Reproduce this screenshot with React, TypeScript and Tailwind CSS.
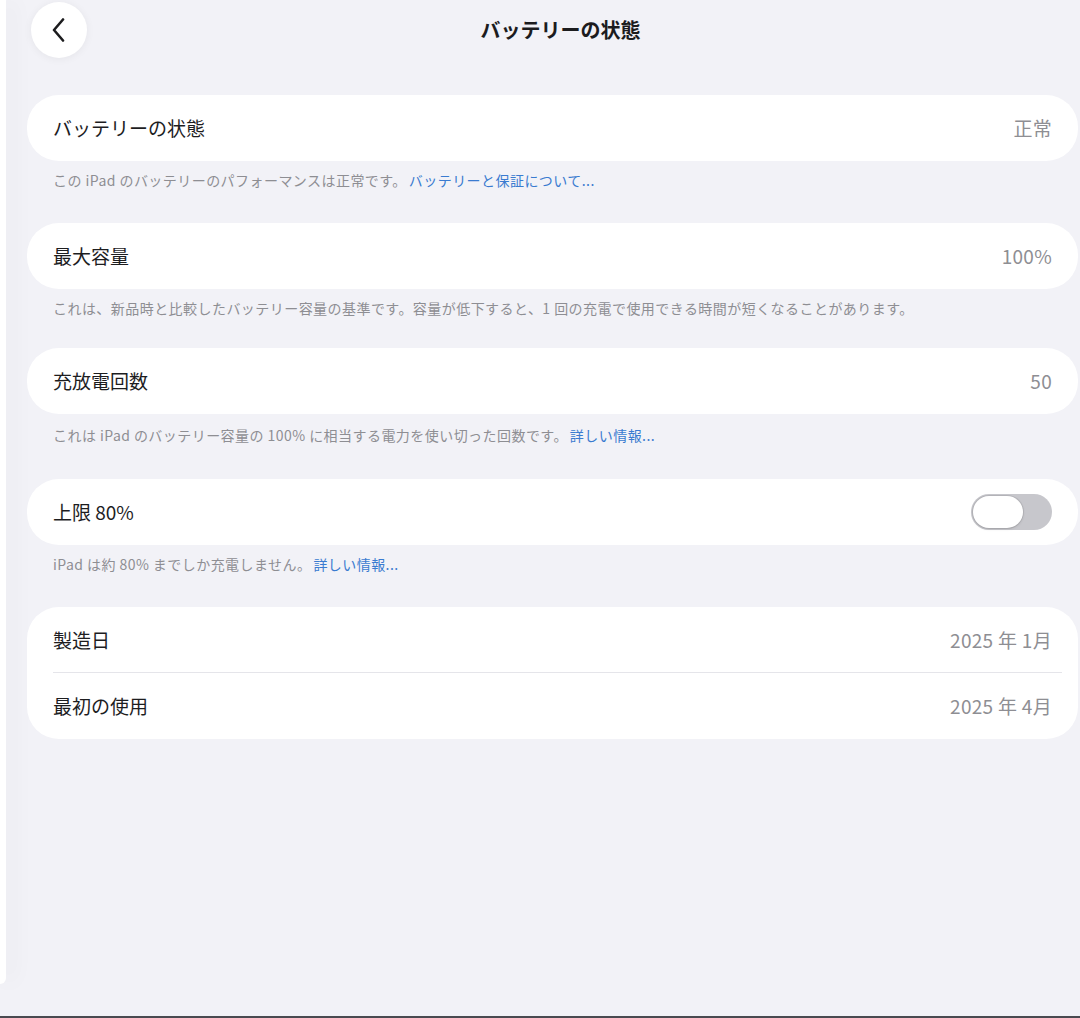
import type { ReactNode } from 'react'

const font = { fontFamily: '"Noto Sans CJK JP", "Noto Sans", sans-serif' }

function Card({ children }: { children: ReactNode }) {
  return <div className="bg-white rounded-[32px] mr-[2px]">{children}</div>
}

function Row({ label, value, divider }: { label: string; value?: ReactNode; divider?: boolean }) {
  return (
    <div className="relative h-[66px] flex items-center justify-between pl-[26px] pr-[26px]">
      <span className="text-[19px] text-[#1d1d1f]">{label}</span>
      {typeof value === 'string' ? (
        <span className="text-[19px] text-[#8e8e93] tracking-[0.3px]">{value}</span>
      ) : (
        value
      )}
      {divider && <div className="absolute left-[26px] right-[16px] bottom-0 h-px bg-[#e5e5ea]" />}
    </div>
  )
}

function Note({ children, className = 'h-[62px] pt-[10px]' }: { children: ReactNode; className?: string }) {
  return (
    <div className={`${className} pl-[26px] text-[14px] leading-[18px] text-[#8e8e93] tracking-[0.45px]`}>
      {children}
    </div>
  )
}

function Link({ children }: { children: ReactNode }) {
  return <span className="text-[#3a7bd0] ml-[2px]">{children}</span>
}

function Toggle() {
  return (
    <div className="w-[81px] h-[36px] rounded-full bg-[#c7c7cc] p-[2px]">
      <div className="w-[50px] h-[32px] rounded-full bg-white shadow-[0_0_0_1px_rgba(0,0,0,0.08),0_1px_3px_rgba(0,0,0,0.12)]" />
    </div>
  )
}

export default function App() {
  return (
    <div className="w-[1080px] h-[1018px] bg-[#f2f2f7] flex flex-col overflow-hidden" style={font}>
      <div className="flex flex-1 min-h-0">
        <div className="w-[6px] h-[984px] bg-white rounded-br-[8px] shadow-[6px_0_22px_rgba(0,0,0,0.07)] shrink-0" />
        <main className="flex-1 pl-[21px]">
          <header className="h-[60px] flex items-center">
            <button className="ml-[4px] w-[56px] h-[56px] rounded-full bg-white shadow-[0_1px_8px_rgba(0,0,0,0.06)] flex items-center justify-center">
              <svg width="13" height="24" viewBox="0 0 13 24" fill="none" className="-ml-[1px]">
                <path d="M11 1.5 L2 12 L11 22.5" stroke="#1c1c1e" strokeWidth="2.6" strokeLinecap="round" strokeLinejoin="round" />
              </svg>
            </button>
            <h1 className="flex-1 text-center pr-[46px] text-[20px] font-bold text-[#1c1c1e]">バッテリーの状態</h1>
          </header>

          <div className="mt-[35px]">
            <Card>
              <Row label="バッテリーの状態" value="正常" />
            </Card>
            <Note>
              この iPad のバッテリーのパフォーマンスは正常です。<Link>バッテリーと保証について...</Link>
            </Note>

            <Card>
              <Row label="最大容量" value="100%" />
            </Card>
            <Note className="h-[59px] pt-[10px]">
              これは、新品時と比較したバッテリー容量の基準です。容量が低下すると、1 回の充電で使用できる時間が短くなることがあります。
            </Note>

            <Card>
              <Row label="充放電回数" value="50" />
            </Card>
            <Note className="h-[65px] pt-[12px]">
              これは iPad のバッテリー容量の 100% に相当する電力を使い切った回数です。<Link>詳しい情報...</Link>
            </Note>

            <Card>
              <Row label="上限 80%" value={<Toggle />} />
            </Card>
            <Note>
              iPad は約 80% までしか充電しません。<Link>詳しい情報...</Link>
            </Note>

            <Card>
              <Row label="製造日" value="2025 年 1月" divider />
              <Row label="最初の使用" value="2025 年 4月" />
            </Card>
          </div>
        </main>
      </div>
      <div className="h-[2px] bg-[#4a4a50] shrink-0" />
    </div>
  )
}
